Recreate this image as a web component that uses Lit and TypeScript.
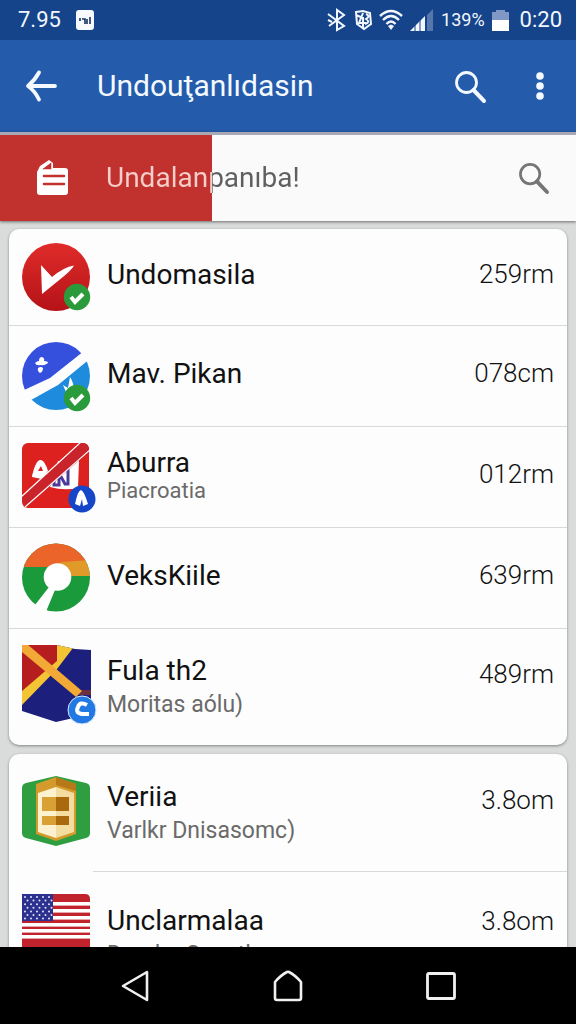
import { LitElement, html, css, svg, nothing } from "lit";
import { customElement, property } from "lit/decorators.js";

type IconName = "play" | "split" | "band" | "ring" | "shield" | "box" | "flag";

interface Entry {
  icon: IconName;
  title: string;
  note?: string;
  value: string;
  size: "first" | "normal" | "tight" | "tall" | "last";
}

const flagStripes = [5, 12, 19, 26, 32, 38];
const stars = Array.from({ length: 35 }, (_, i) => ({
  x: 3 + (i % 5) * 6 + (Math.floor(i / 5) % 2) * 2.5,
  y: 0 + Math.floor(i / 5) * 3.6,
}));

const tick = (x: number, y: number) => svg`
  <circle cx=${x} cy=${y} r="13.2" fill="#2a9a3a"></circle>
  <path d="M${x - 6} ${y} l4 5 l8 -8" fill="none" stroke="#fff" stroke-width="4"></path>`;

const art = {
  play: svg`
    <defs><linearGradient id="g" x1="0" y1="0" x2="0" y2="1">
      <stop offset="0" stop-color="#e02c2a"></stop><stop offset="1" stop-color="#b51218"></stop>
    </linearGradient></defs>
    <circle cx="34" cy="40" r="34" fill="url(#g)"></circle>
    <path d="M19 28 L30 40 Q42 30 52 28.500 Q50 33 36 44 L20 57 Z" fill="#fff"></path>
    ${tick(55, 60)}`,
  split: svg`
    <defs><clipPath id="c"><circle cx="34" cy="40" r="34"></circle></clipPath></defs>
    <g clip-path="url(#c)">
      <path d="M-2 56 L28 42 L62 15 V0 H-2 Z" fill="#3450dc"></path>
      <path d="M9 64 L36 49 L70 21 V78 H9 Z" fill="#1f8bdc"></path>
    </g>
    <path d="M13 27 q2 -2 4 -2 q0 -4 3 -4 q3 1 2 4 q4 0 4 2 q-4 3 -7 2 q-5 1 -6 -2 M16 32 q3 -2 5 0 q0 4 -3 5 q-3 -2 -2 -5" fill="#fff"></path>
    <path d="M41 49 l5 3 l2 -11 q3 4 4 12 l-8 3 Z" fill="#fff"></path>
    ${tick(55, 62)}`,
  band: svg`
    <defs><clipPath id="c"><rect y="6" width="67" height="65" rx="6"></rect></clipPath></defs>
    <g clip-path="url(#c)">
      <rect y="6" width="67" height="65" fill="#dc211f"></rect>
      <path d="M36 24 H57 L56 51 Q42 54 28 50 Z" fill="#fff"></path>
      <path d="M28 46 l4 -6 v8 h5 V36 l6 11 h3 V31" fill="none" stroke="#4a3a9c" stroke-width="3"></path>
      <path d="M10 39 Q14 22 19 23 Q23 24 26 34 L20 42 L10 40 Z" fill="#fff"></path>
      <path d="M16 34 l3 -5 l2 5 Z" fill="#dc211f"></path>
      <path d="M-1 60 L58 5 H70 V12 L4 70 Z" fill="#c9242c"></path>
      <path d="M-1 60 L59 5 M3 70 L69 12" stroke="#fff" stroke-width="1.2"></path>
    </g>
    <circle cx="60" cy="62" r="13.500" fill="#1646c8"></circle>
    <path d="M53 67 Q56 53 59 53 Q62 54 66 67 L61 69 L60 62 L58 69 Z" fill="#fff"></path>`,
  ring: svg`
    <defs><clipPath id="c"><circle cx="34" cy="39.500" r="34"></circle></clipPath></defs>
    <g clip-path="url(#c)">
      <rect width="68" height="76" fill="#1b9a3c"></rect>
      <path d="M36 22 H70 V38 H36 Z" fill="#e09a2a"></path>
      <path d="M0 0 H68 V22 L40 24 L30 29 H0 Z" fill="#eb6429"></path>
    </g>
    <path d="M27 49 L13 67 L23 76 L33 52 Z" fill="#fff"></path>
    <circle cx="35.500" cy="39" r="13.800" fill="#fff"></circle>`,
  shield: svg`
    <defs><clipPath id="c"><path d="M0 -2 H35 L53 2 L69 3 V67 L34 75 L0 64 Z"></path></clipPath></defs>
    <g clip-path="url(#c)">
      <rect y="-3" width="70" height="80" fill="#1c1f7c"></rect>
      <path d="M0 -3 H36 V16 L0 44 Z" fill="#b51d1e"></path>
      <path d="M54 43 h16 v5 h-16 Z" fill="#6b3140"></path>
      <path d="M35 -3 H54 L35 22 L0 58 V44 L35 14 Z" fill="#f3c535"></path>
      <path d="M0 -3 H5 L60 44 L54 50 L0 5 Z" fill="#f2a936"></path>
    </g>
    <circle cx="60" cy="63" r="14" fill="#2379e4" stroke="#d8eafc" stroke-width="1"></circle>
    <path d="M65 58 Q58 54 56 60 Q53 66 60 67 H67" fill="none" stroke="#fff" stroke-width="4"></path>`,
  box: svg`
    <path d="M34 3 L64 10 Q68 11 68 15 V60 Q68 64 64 65 L34 73 L4 65 Q0 64 0 60 V15 Q0 11 4 10 Z" fill="#2f9e41"></path>
    <path d="M34 4 L54 11 V61 L34 68 L14 61 V11 Z" fill="#d59a2c"></path>
    <path d="M34 4 L54 11 V18 L34 12 Z" fill="#b7781a"></path>
    <path d="M34 14 L16 20 V59 L34 65 Z" fill="#fdf2cf"></path>
    <path d="M34 14 L52 20 V59 L34 65 Z" fill="#f3dda0"></path>
    <path d="M20 24 H34 V38 H20 Z M20 43 H34 V52 H20 Z" fill="#d9a036"></path>
    <path d="M34 24 H47 V38 H34 Z M34 43 H47 V52 H34 Z" fill="#a9690c"></path>`,
  flag: svg`
    <path d="M0 -3 H63 Q68 -3 68 2 V62 H0 Z" fill="#c0232c"></path>
    ${flagStripes.map((y) => svg`<rect y=${y} width="68" height="3.600" fill="#fff"></rect>`)}
    <rect y="-3" width="31" height="27" fill="#2c3190"></rect>
    ${stars.map((s) => svg`<circle cx=${s.x} cy=${s.y} r="1" fill="#e4e6f8"></circle>`)}`,
};

@customElement("entry-icon")
class EntryIcon extends LitElement {
  @property() name: IconName = "play";

  static styles = css`
    :host { display: block; flex: none; }
    .art { display: block; width: 76px; height: 80px; overflow: visible; }
  `;

  render() {
    return html`<svg class="art" viewBox="0 0 76 80" aria-hidden="true">${art[this.name]}</svg>`;
  }
}

@customElement("entry-card")
class EntryCard extends LitElement {
  @property({ attribute: false }) entries: Entry[] = [];
  @property({ type: Boolean, reflect: true }) inset = false;

  static styles = css`
    :host {
      display: block;
      flex: none;
      border-radius: 10px;
      background: #fdfdfd;
      box-shadow: 0 1px 3px rgba(0, 0, 0, 0.4);
      --rule-start: 0px;
    }
    :host([inset]) { --rule-start: 84px; }
    .list { list-style: none; margin: 0; padding: 0; }
    .item + .item {
      background: linear-gradient(#d8dada, #d8dada) var(--rule-start) 0 / 100% 1px no-repeat;
    }
    .row {
      display: flex;
      align-items: center;
      gap: 9px;
      min-height: 101px;
      padding: 0 13px;
      box-sizing: border-box;
      color: #111;
      text-decoration: none;
    }
    .first { min-height: 96px; }
    .tall { min-height: 117px; }
    .last { min-height: 131px; }
    .text { flex: 1; min-width: 0; padding-bottom: 4px; }
    .title { display: block; font-size: 28px; line-height: 32px; }
    .note { display: block; font-size: 23px; line-height: 36px; color: #6a6a6a; }
    .tight .note { font-size: 22px; line-height: 24px; }
    .value { font-size: 26px; line-height: 32px; padding-bottom: 6px; font-weight: 300; }
    .tall .text, .last .text { padding: 4px 0 0; }
    .tall .value { padding-bottom: 26px; }
    .last .value { padding-bottom: 32px; }
  `;

  render() {
    return html`<ul class="list">
      ${this.entries.map(
        (e) => html`<li class="item">
          <a class="row ${e.size}" href="#">
            <entry-icon name=${e.icon}></entry-icon>
            <span class="text">
              <span class="title">${e.title}</span>
              ${e.note ? html`<span class="note">${e.note}</span>` : nothing}
            </span>
            <span class="value">${e.value}</span>
          </a>
        </li>`
      )}
    </ul>`;
  }
}

@customElement("app-root")
class AppRoot extends LitElement {
  static styles = css`
    :host {
      display: flex;
      flex-direction: column;
      height: 100vh;
      overflow: hidden;
      background: #dadbdb;
      font-family: Roboto, "Noto Sans", sans-serif;
    }
    button {
      display: grid;
      place-items: center;
      padding: 0;
      border: 0;
      background: none;
      color: inherit;
    }
    svg { display: block; overflow: visible; }
    .status {
      display: flex;
      align-items: center;
      height: 40px;
      padding: 0 14px 0 18px;
      background: #16448a;
      color: #f2f7ff;
      font-size: 22px;
      line-height: 38px;
    }
    .status-left { display: flex; align-items: center; gap: 14px; flex: 1; }
    .status-right { display: flex; align-items: center; gap: 7px; }
    .percent { font-size: 18px; }
    .clock { padding-left: 4px; }
    .bar {
      display: flex;
      align-items: center;
      height: 92px;
      padding: 0 12px 0 17px;
      background: #245cab;
      color: #f4f9ff;
    }
    .tool { width: 48px; height: 56px; }
    .heading {
      flex: 1;
      margin: 0;
      padding-left: 32px;
      font-size: 30px;
      line-height: 40px;
      font-weight: 400;
    }
    .tools { display: flex; gap: 22px; }
    .filter {
      display: flex;
      align-items: center;
      height: 86px;
      border-top: 3px solid #a9a9b6;
      padding-right: 19px;
      background: linear-gradient(90deg, #c1322f 212px, #f9faf9 212px);
      box-shadow: 0 1px 3px rgba(0, 0, 0, 0.5);
      color: #757575;
    }
    .folder { width: 106px; display: grid; place-items: center; }
    .filter-text {
      flex: 1;
      font-size: 28px;
      line-height: 36px;
      color: transparent;
      background: linear-gradient(90deg, #f6cfca 106px, #5f5f5f 106px);
      -webkit-background-clip: text;
      background-clip: text;
    }
    .content {
      flex: 1;
      min-height: 0;
      overflow: hidden;
      display: flex;
      flex-direction: column;
      gap: 9px;
      padding: 8px 9px 0;
    }
    .nav {
      display: flex;
      justify-content: center;
      gap: 105px;
      align-items: center;
      height: 77px;
      background: #000;
      color: #f2f0ee;
    }
    .status, .bar, .filter, .nav { flex: none; }
  `;

  private apps: Entry[] = [
    { icon: "play", title: "Undomasila", value: "259rm", size: "first" },
    { icon: "split", title: "Mav. Pikan", value: "078cm", size: "normal" },
    { icon: "band", title: "Aburra", note: "Piacroatia", value: "012rm", size: "tight" },
    { icon: "ring", title: "VeksKiile", value: "639rm", size: "normal" },
    { icon: "shield", title: "Fula th2", note: "Moritas aólu)", value: "489rm", size: "tall" },
  ];

  private more: Entry[] = [
    { icon: "box", title: "Veriia", note: "Varlkr Dnisasomc)", value: "3.8om", size: "tall" },
    { icon: "flag", title: "Unclarmalaa", note: "Dandar Sanatl", value: "3.8om", size: "last" },
  ];

  render() {
    const lens = svg`<circle cx="11.500" cy="11.500" r="10" fill="none" stroke="currentColor" stroke-width="2.800"></circle>
      <path d="M18.500 19 L29 30" stroke="currentColor" stroke-width="4" stroke-linecap="round"></path>`;
    return html`
      <div class="status">
        <div class="status-left">
          <span>7.95</span>
          <svg width="20" height="20" viewBox="0 0 20 20" aria-hidden="true">
            <rect x="1" width="18" height="20" rx="3" fill="#f6f9ff"></rect>
            <path d="M5 8 v3 M7 9 h3 v5 M12 9 v5 M15 7 v7" stroke="#16305e" stroke-width="1.600" fill="none"></path>
          </svg>
        </div>
        <div class="status-right">
          <svg width="20" height="22" viewBox="0 0 20 22" fill="none" stroke="currentColor" stroke-width="2" aria-hidden="true">
            <path d="M1 5 L17 17 L10 21 V1 L17 6 L2 17 M1 11 L5 13"></path>
          </svg>
          <svg width="18" height="20" viewBox="0 0 18 20" fill="none" stroke="currentColor" stroke-width="2" aria-hidden="true">
            <path d="M2 2 L9 1 L16 3 L17 14 L10 19 L3 14 Z M2 5 L9 8 V18 M9 3 L5 13 H12 M12 4 Q17 6 12 9 Q17 12 11 14"></path>
          </svg>
          <svg width="24" height="20" viewBox="0 0 24 20" fill="none" stroke="currentColor" stroke-width="2.400" aria-hidden="true">
            <path d="M1 6 Q12 -4 23 6 M4 10 Q12 2 20 10 M7.500 14 Q12 9 16.500 14"></path>
            <path d="M9 16 L12 14.500 L15 16 L12 20 Z" fill="currentColor" stroke="none"></path>
          </svg>
          <svg width="24" height="22" viewBox="0 0 24 22" aria-hidden="true">
            <path d="M0 22 L15 7 V22 Z" fill="#f2f7ff"></path>
            <path d="M17 6 L23 0 V22 H17 Z" fill="#5577ad"></path>
            <path d="M5 16 V22 M10 11 V22" stroke="#16448a" stroke-width="1"></path>
          </svg>
          <span class="percent">139%</span>
          <svg width="17" height="21" viewBox="0 0 17 21" aria-hidden="true">
            <path d="M4 0 H13 V2 H17 V11 H0 V2 H4 Z" fill="#8198c6"></path>
            <path d="M0 10 H17 V21 H0 Z" fill="#fff"></path>
          </svg>
          <span class="clock">0:20</span>
        </div>
      </div>

      <header class="bar">
        <button class="tool" aria-label="Back">
          <svg width="30" height="30" viewBox="0 0 30 30" fill="none" stroke="currentColor" stroke-width="3.800" stroke-linecap="round" stroke-linejoin="round">
            <path d="M13 1.500 Q9 9 2 15 Q9 20 13 28.500 M3 15 H29"></path>
          </svg>
        </button>
        <h1 class="heading">Undouţanlıdasin</h1>
        <div class="tools">
          <button class="tool" aria-label="Search">
            <svg width="30" height="31" viewBox="0 0 30 31">${lens}</svg>
          </button>
          <button class="tool" aria-label="More options">
            <svg width="8" height="28" viewBox="0 0 8 28" fill="currentColor">
              <circle cx="4" cy="4" r="3.800"></circle><circle cx="4" cy="14" r="3.800"></circle><circle cx="4" cy="24" r="3.800"></circle>
            </svg>
          </button>
        </div>
      </header>

      <div class="filter">
        <span class="folder">
          <svg width="32" height="36" viewBox="0 0 32 36" aria-hidden="true">
            <path d="M0 12 L3 6 L12 0 L16 3 V8 H28 Q31 8 31 11 V32 Q31 35 28 35 H3 Q0 35 0 32 Z" fill="#fff"></path>
            <path d="M9 8 L13 5 V8 Z M7 16 H27 M7 24 H27" stroke="#c1322f" stroke-width="2.600" fill="#c1322f" stroke-linecap="round"></path>
          </svg>
        </span>
        <span class="filter-text">Undalanpanıba!</span>
        <button class="tool" aria-label="Search list">
          <svg width="29" height="30" viewBox="0 0 30 31">${lens}</svg>
        </button>
      </div>

      <main class="content">
        <entry-card .entries=${this.apps}></entry-card>
        <entry-card inset .entries=${this.more}></entry-card>
      </main>

      <nav class="nav">
        <button class="tool" aria-label="Back">
          <svg width="28" height="32" viewBox="0 0 28 32" fill="none" stroke="currentColor" stroke-width="2.600" stroke-linejoin="round">
            <path d="M2 16 L26 2 V30 Z"></path>
          </svg>
        </button>
        <button class="tool" aria-label="Home">
          <svg width="30" height="32" viewBox="0 0 30 32" fill="none" stroke="currentColor" stroke-width="2.600" stroke-linejoin="round">
            <path d="M2 12 Q8 5 14 2 Q15 1.500 16 2 Q22 5 28 12 V28 Q28 30 26 30 H4 Q2 30 2 28 Z"></path>
          </svg>
        </button>
        <button class="tool" aria-label="Recent apps">
          <svg width="30" height="28" viewBox="0 0 30 28" fill="none" stroke="currentColor" stroke-width="2.800">
            <rect x="1.500" y="1.500" width="27" height="25" rx="1.500"></rect>
          </svg>
        </button>
      </nav>
    `;
  }
}
